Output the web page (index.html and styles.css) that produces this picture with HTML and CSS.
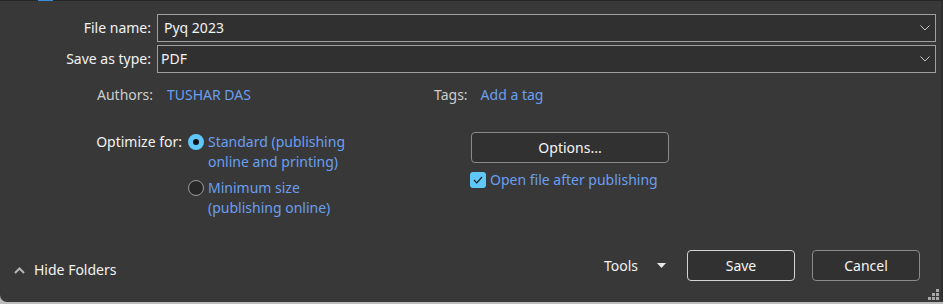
FILE: index.html
```html
<!DOCTYPE html>
<html lang="en">
<head>
    <meta charset="UTF-8">
    <title>Save As</title>
    <link rel="stylesheet" href="styles.css">
</head>
<body>
    <div class="dialog">
        <span class="accent"></span>

        <div class="fields">
            <label class="field-label">File name:</label>
            <div class="combo combo-edit">
                <span>Pyq 2023</span>
                <svg class="chevron" width="10" height="6" viewBox="0 0 10 6"><polyline points="0.5,0.5 5,5 9.5,0.5" fill="none" stroke="#c8c8c8" stroke-width="1"/></svg>
            </div>
            <label class="field-label">Save as type:</label>
            <div class="combo">
                <span>PDF</span>
                <svg class="chevron" width="10" height="6" viewBox="0 0 10 6"><polyline points="0.5,0.5 5,5 9.5,0.5" fill="none" stroke="#c8c8c8" stroke-width="1"/></svg>
            </div>
        </div>

        <div class="meta">
            <span class="meta-label meta-authors">Authors:</span>
            <span class="meta-value meta-author-value">TUSHAR DAS</span>
            <span class="meta-label meta-tags">Tags:</span>
            <span class="meta-value meta-tag-value">Add a tag</span>
        </div>

        <div class="optimize">
            <span class="opt-label">Optimize for:</span>
            <div class="radios">
                <div class="radio">
                    <span class="radio-dot checked"></span>
                    <span class="radio-text">Standard (publishing<br>online and printing)</span>
                </div>
                <div class="radio">
                    <span class="radio-dot"></span>
                    <span class="radio-text">Minimum size<br>(publishing online)</span>
                </div>
            </div>
            <div class="publish">
                <button class="btn btn-options">Options...</button>
                <div class="check">
                    <span class="check-box">
                        <svg width="10" height="8" viewBox="0 0 10 8"><polyline points="1,4 3.8,6.8 9,1" fill="none" stroke="#1c1c1c" stroke-width="1.2"/></svg>
                    </span>
                    <span class="check-text">Open file after publishing</span>
                </div>
            </div>
        </div>

        <div class="footer">
            <div class="hide-folders">
                <svg width="11" height="7" viewBox="0 0 11 7"><polyline points="1,6 5.5,1.5 10,6" fill="none" stroke="#b8b8b8" stroke-width="2"/></svg>
                <span>Hide Folders</span>
            </div>
            <div class="actions">
                <span class="tools">Tools</span>
                <svg class="tools-caret" width="9" height="5" viewBox="0 0 9 5"><polygon points="0,0 9,0 4.5,5" fill="#e8e8e8"/></svg>
                <button class="btn btn-save">Save</button>
                <button class="btn btn-cancel">Cancel</button>
            </div>
        </div>

        <svg class="grip" width="12" height="12" viewBox="0 0 12 12">
            <rect x="8" y="0" width="3" height="3" fill="#a8a8a8"/>
            <rect x="4" y="4" width="3" height="3" fill="#a8a8a8"/>
            <rect x="8" y="4" width="3" height="3" fill="#a8a8a8"/>
            <rect x="0" y="8" width="3" height="3" fill="#a8a8a8"/>
            <rect x="4" y="8" width="3" height="3" fill="#a8a8a8"/>
            <rect x="8" y="8" width="3" height="3" fill="#a8a8a8"/>
        </svg>
    </div>
</body>
</html>
```

FILE: styles.css
```css
html {
    background: #bdbdbd;
}
body {
    margin: 0;
    font-family: "Noto Sans", "Open Sans", sans-serif;
    font-size: 14px;
    line-height: 20px;
    color: #f2f2f2;
}
.dialog {
    position: relative;
    height: 302px;
    box-sizing: border-box;
    background: #383838;
    border-top: 1px solid #262626;
    border-right: 2px solid #2e2e2e;
    border-bottom-left-radius: 7px;
    display: flex;
    flex-direction: column;
}
.accent {
    position: absolute;
    top: -1px;
    left: 38px;
    width: 15px;
    height: 1px;
    background: #3b8fd9;
}
.fields {
    display: grid;
    grid-template-columns: 151px 1fr;
    column-gap: 6px;
    row-gap: 3px;
    align-items: center;
    padding: 13px 5px 0 0;
}
.field-label {
    text-align: right;
}
.combo {
    height: 28px;
    box-sizing: border-box;
    border: 1px solid #a0a0a0;
    background: #303030;
    display: flex;
    align-items: center;
    justify-content: space-between;
    padding: 0 5px 0 3px;
}
.combo-edit {
    padding-left: 6px;
}
.meta {
    display: flex;
    margin-top: 12px;
}
.meta-label {
    color: #cdcdcd;
}
.meta-authors {
    width: 153px;
    text-align: right;
}
.meta-value {
    color: #6a9ff0;
    margin-left: 14px;
}
.meta-author-value {
    width: 253px;
    margin-right: 14px;
}
.meta-tag-value {
    margin-left: 13px;
}
.optimize {
    display: flex;
    margin-top: 27px;
}
.opt-label {
    width: 182px;
    text-align: right;
}
.radios {
    width: 283px;
    margin-left: 6px;
    display: flex;
    flex-direction: column;
    gap: 6px;
}
.radio {
    display: flex;
    align-items: flex-start;
    gap: 4px;
}
.radio-text,
.check-text {
    color: #6a9ff0;
}
.radio-dot {
    width: 16px;
    height: 16px;
    margin-top: 2px;
    box-sizing: border-box;
    border-radius: 50%;
    border: 1px solid #9c9c9c;
    background: #272727;
    flex-shrink: 0;
}
.radio-dot.checked {
    border: 5px solid #5fc8f8;
    background: #111;
}
.publish {
    display: flex;
    flex-direction: column;
    align-items: flex-start;
}
.btn {
    height: 31px;
    box-sizing: border-box;
    border: 1px solid #8a8a8a;
    border-radius: 4px;
    background: #313131;
    color: #f5f5f5;
    font: inherit;
    padding: 0;
}
.btn-options {
    width: 198px;
}
.check {
    display: flex;
    align-items: center;
    gap: 4px;
    margin: 7px 0 0 -1px;
}
.check-box {
    width: 16px;
    height: 16px;
    border-radius: 3px;
    background: #5fc8f8;
    display: flex;
    align-items: center;
    justify-content: center;
}
.footer {
    margin-top: auto;
    display: flex;
    align-items: flex-end;
    justify-content: space-between;
    padding: 0 21px 21px 14px;
}
.hide-folders {
    display: flex;
    align-items: center;
    gap: 9px;
    margin-bottom: 1px;
}
.actions {
    display: flex;
    align-items: center;
}
.tools-caret {
    margin-left: 19px;
}
.btn-save {
    width: 108px;
    margin-left: 21px;
    border-color: #d4d4d4;
}
.btn-cancel {
    width: 108px;
    margin-left: 17px;
}
.grip {
    position: absolute;
    right: 1px;
    bottom: 1px;
}
```
